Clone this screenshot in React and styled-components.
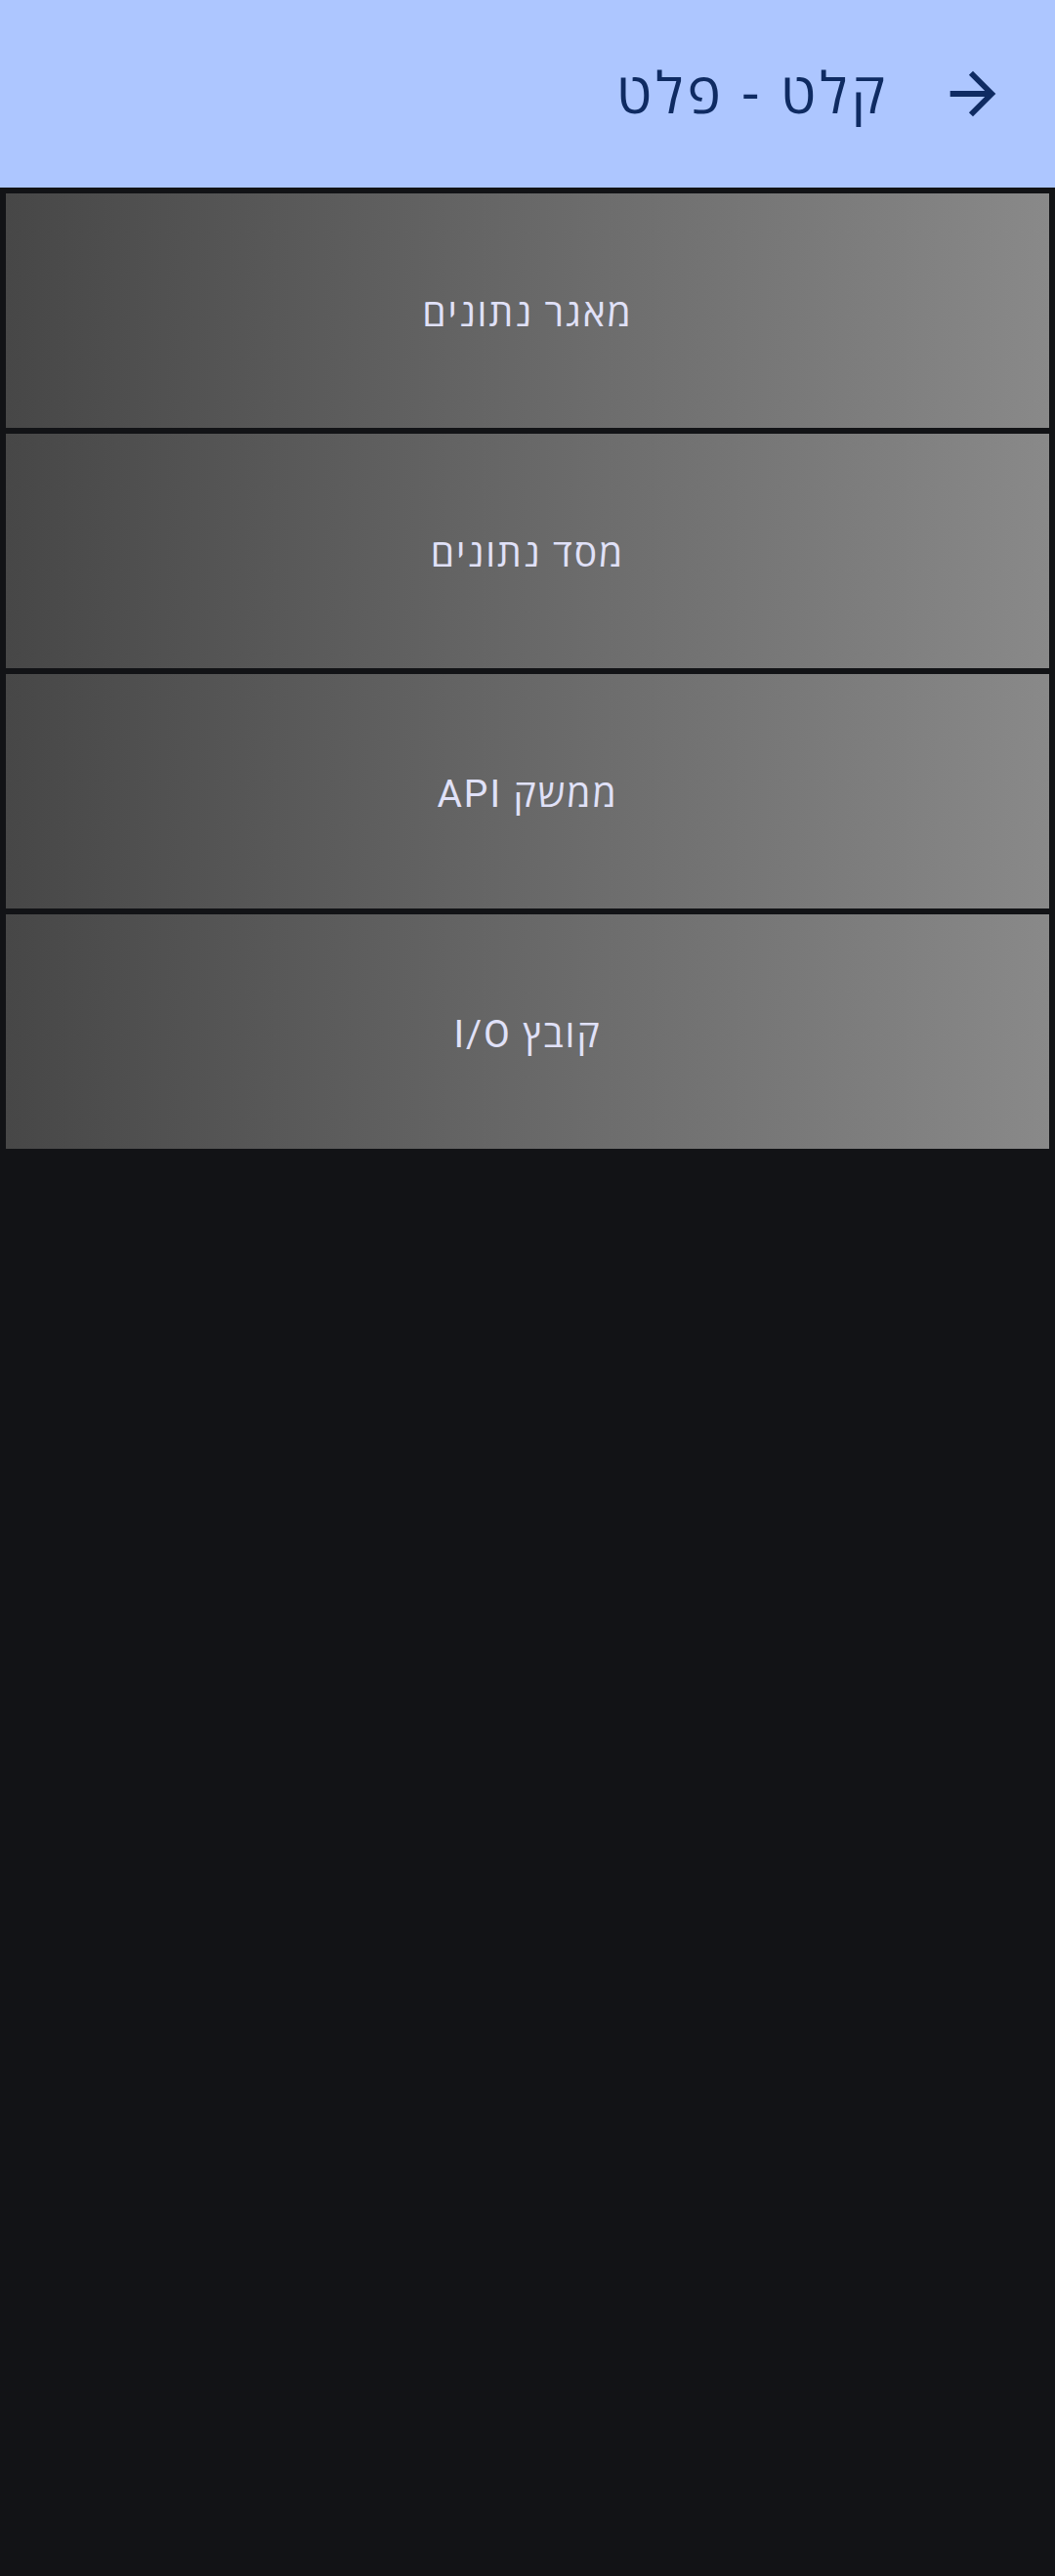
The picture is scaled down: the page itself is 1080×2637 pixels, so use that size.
import React from "react";
import styled, { createGlobalStyle } from "styled-components";

const Global = createGlobalStyle`
  html, body {
    margin: 0;
    padding: 0;
    background: #121316;
  }
  body {
    font-family: Roboto, "Open Sans", "DejaVu Sans", sans-serif;
    min-height: 2637px;
  }
`;

const Page = styled.div`
  direction: rtl;
  min-height: 2637px;
  background: #121316;
`;

const Header = styled.header`
  height: 192px;
  background: #adc6ff;
  display: flex;
  align-items: center;
  padding: 0 48px;
  gap: 50px;
`;

const BackButton = styled.button`
  width: 72px;
  height: 72px;
  padding: 0;
  border: 0;
  background: transparent;
  display: flex;
  align-items: center;
  justify-content: center;
  color: #0f2b62;
  flex: none;
`;

const Title = styled.h1`
  margin: 0;
  font-family: Roboto, "Open Sans", sans-serif;
  font-size: 58px;
  font-weight: 400;
  letter-spacing: 0.07em;
  color: #0f2b62;
  line-height: 1;
`;

const List = styled.div`
  display: flex;
  flex-direction: column;
  gap: 6px;
  padding: 6px;
`;

const Item = styled.button`
  height: 240px;
  width: 100%;
  border: 0;
  padding: 0;
  background: linear-gradient(to right, #474747, #898989);
  color: #e0e1f8;
  font-family: Roboto, "Open Sans", sans-serif;
  font-size: 39px;
  letter-spacing: 0.05em;
  display: flex;
  align-items: center;
  justify-content: center;
  direction: rtl;
`;

const ArrowIcon = () => (
  <svg width="70" height="70" viewBox="0 0 24 24" fill="currentColor">
    <path d="M12 4l-1.41 1.41L16.17 11H4v2h12.17l-5.58 5.59L12 20l8-8z" />
  </svg>
);

const items = ["מאגר נתונים", "מסד נתונים", "ממשק API", "קובץ I/O"];

export default function App() {
  return (
    <Page>
      <Global />
      <Header>
        <BackButton aria-label="back">
          <ArrowIcon />
        </BackButton>
        <Title>קלט - פלט</Title>
      </Header>
      <List>
        {items.map((t) => (
          <Item key={t}>{t}</Item>
        ))}
      </List>
    </Page>
  );
}
